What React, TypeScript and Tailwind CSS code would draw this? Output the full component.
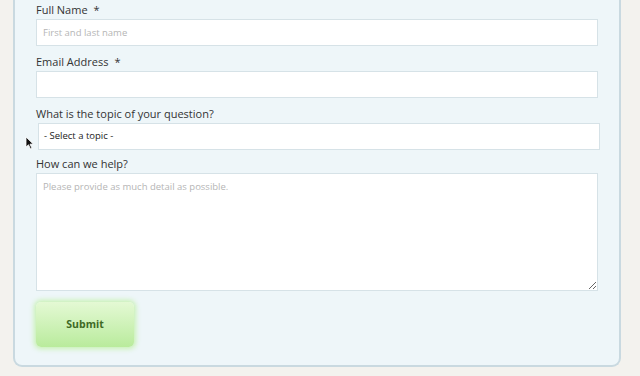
import React from "react";

export default function App() {
  const font = { fontFamily: '"Open Sans", "Noto Sans", sans-serif' };
  return (
    <div className="relative w-[640px] h-[376px] bg-[#f3f2ee] overflow-hidden" style={font}>
      <div className="ml-[13px] w-[608px] h-[367px] bg-[#eef6f9] border-x-2 border-b-2 border-[#c9d9e0] rounded-b-[9px] px-[21px] pt-[1px]">
        <label className="block text-[11px] leading-[18px] text-[#333]">
          Full Name<span className="ml-[6px]">*</span>
        </label>
        <input
          className="block w-[562px] h-[27px] bg-white border border-[#d6e2e7] px-[6px] text-[9.5px] text-[#333] placeholder:text-[#b5b5b5] outline-none"
          placeholder="First and last name"
        />
        <label className="block mt-[7px] text-[11px] leading-[18px] text-[#333]">
          Email Address<span className="ml-[6px]">*</span>
        </label>
        <input className="block w-[562px] h-[27px] bg-white border border-[#d6e2e7] px-[6px] text-[9.5px] outline-none" />
        <label className="block mt-[7px] text-[11px] leading-[18px] text-[#333]">What is the topic of your question?</label>
        <div className="ml-[2px] w-[562px] h-[27px] bg-white border border-[#d6e2e7] flex items-center px-[5px] text-[9.5px] text-[#222]">
          - Select a topic -
        </div>
        <label className="block mt-[5px] text-[11px] leading-[18px] text-[#333]">How can we help?</label>
        <textarea
          className="block w-[562px] h-[118px] bg-white border border-[#d6e2e7] px-[6px] py-[6px] text-[9.5px] text-[#333] placeholder:text-[#b5b5b5] outline-none resize-y"
          placeholder="Please provide as much detail as possible."
        />
        <button className="mt-[11px] w-[98px] h-[45px] rounded-[5px] bg-gradient-to-b from-[#e4f9d4] to-[#b9eb9c] shadow-[0_0_5px_2px_rgba(190,240,160,0.8)] text-[10.5px] font-bold text-[#3f6a25]">
          Submit
        </button>
      </div>
      <svg className="absolute left-[25px] top-[136px]" width="9" height="14" viewBox="0 0 9 14">
        <path d="M1 1 L1 11 L3.5 8.8 L5.5 13 L7 12.3 L5 8.2 L8.2 8 Z" fill="#111" stroke="#fff" strokeWidth="0.8" />
      </svg>
    </div>
  );
}
